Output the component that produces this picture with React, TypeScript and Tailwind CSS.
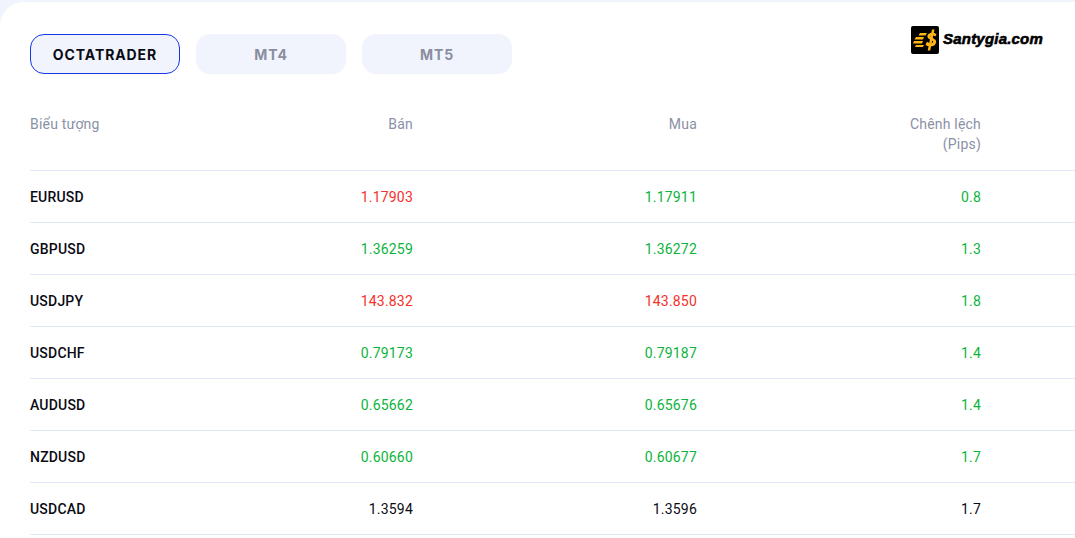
export default function App() {
  const rows = [
    ["EURUSD", "1.17903", "r", "1.17911", "g", "0.8", "g"],
    ["GBPUSD", "1.36259", "g", "1.36272", "g", "1.3", "g"],
    ["USDJPY", "143.832", "r", "143.850", "r", "1.8", "g"],
    ["USDCHF", "0.79173", "g", "0.79187", "g", "1.4", "g"],
    ["AUDUSD", "0.65662", "g", "0.65676", "g", "1.4", "g"],
    ["NZDUSD", "0.60660", "g", "0.60677", "g", "1.7", "g"],
    ["USDCAD", "1.3594", "k", "1.3596", "k", "1.7", "k"],
  ];
  const color = (c: string) =>
    c === "r" ? "text-[#f5302b]" : c === "g" ? "text-[#0cb43c]" : "text-[#0b0b14]";
  return (
    <div className="h-[538px] w-[1075px] overflow-hidden bg-[#f1f4fd] pt-[2px] font-['Roboto',sans-serif] text-[14px] tracking-[0.2px]">
      <div className="h-[536px] rounded-tl-[24px] bg-white pl-[30px]">
        <div className="flex h-[168px] flex-col">
          <div className="flex h-[72px] items-start justify-between pt-[32px]">
            <div className="flex gap-4 font-['Inter',sans-serif] text-[14px] font-bold tracking-[0.9px]">
              <div className="flex h-[40px] w-[150px] items-center justify-center rounded-[14px] border border-[#1438e6] bg-[#f1f4fd] text-[#0b0b14]">
                OCTATRADER
              </div>
              <div className="flex h-[40px] w-[150px] items-center justify-center rounded-[14px] bg-[#f1f4fd] text-[#8a8d9f]">
                MT4
              </div>
              <div className="flex h-[40px] w-[150px] items-center justify-center rounded-[14px] bg-[#f1f4fd] text-[#8a8d9f]">
                MT5
              </div>
            </div>
            <div className="mr-[32px] mt-[-8px] flex items-center gap-[4px]">
              <svg width="28" height="28" viewBox="0 0 28 28" className="shrink-0">
                <rect width="28" height="28" rx="2" fill="#000" />
                <path d="M9 7h7l-1.500 2.500H7.500zM5 11h8l-1 2.500H3.500zM3 15h9l-1 2.500H2zM5 19h8l-1 2H4z" fill="#fdb515" />
                <path
                  d="M25.500 8.500c-1.200-1.900-6.500-2.600-8.500.1-1.700 2.500.4 4.300 3 5.500 2 .9 2.500 1.700 1.800 2.500-1 1.100-4 .6-5.800-.8l-1.600 3.100c2.300 1.800 7.600 2.300 9.800-.5 2.200-2.900.4-5-2.500-6.300-1.800-.8-2.700-1.400-2.100-2.200.7-.9 2.900-.7 4.600.5z"
                  fill="#fdb515"
                />
                <path d="M21 3.500h2.500l-4.300 21h-2.500z" fill="#fdb515" />
              </svg>
              <span className="mt-[-3px] font-['Liberation_Sans',sans-serif] text-[15px] font-bold italic leading-none tracking-[0.2px] text-black [-webkit-text-stroke:0.6px_#000]">
                Santygia.com
              </span>
            </div>
          </div>
          <div className="mt-[38px] grid grid-cols-[99px_284px_284px_284px] leading-[20px] text-[#8a91a5]">
            <div className="whitespace-nowrap pt-[2px]">Biểu tượng</div>
            <div className="pt-[2px] text-right">Bán</div>
            <div className="pt-[2px] text-right">Mua</div>
            <div className="pt-[2px] text-right">
              Chênh lệch
              <br />
              (Pips)
            </div>
          </div>
        </div>
        {rows.map((r) => (
          <div
            key={r[0]}
            className="grid h-[52px] grid-cols-[99px_284px_284px_284px] items-center border-t border-[#e2e8f8] leading-[52px]"
          >
            <div className="font-medium text-[#0b0b14]">{r[0]}</div>
            <div className={`text-right ${color(r[2])}`}>{r[1]}</div>
            <div className={`text-right ${color(r[4])}`}>{r[3]}</div>
            <div className={`text-right ${color(r[6])}`}>{r[5]}</div>
          </div>
        ))}
        <div className="border-t border-[#e2e8f8]" />
      </div>
    </div>
  );
}
